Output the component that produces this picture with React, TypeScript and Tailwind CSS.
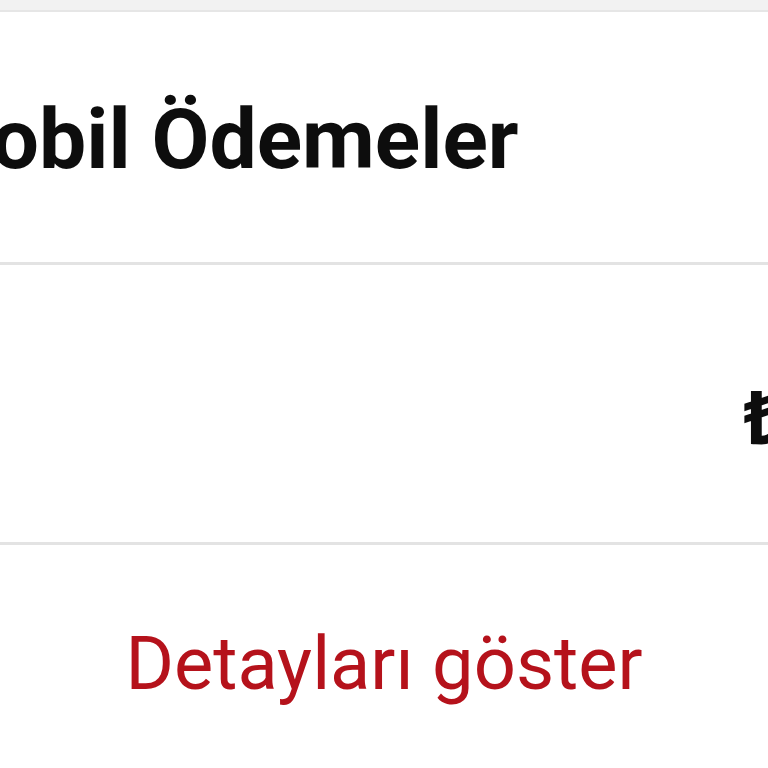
import React from 'react';

const font = { fontFamily: 'Roboto, "Noto Sans", sans-serif' };

export default function App() {
  return (
    <div className="w-[768px] h-[768px] overflow-hidden bg-white" style={font}>
      {/* status strip */}
      <div className="h-[10px] bg-[#f2f2f2]" />
      <div className="h-[2px] bg-[#e6e6e6]" />

      {/* header */}
      <div className="h-[250px] flex items-center overflow-hidden">
        <h1 className="ml-[-82px] whitespace-nowrap text-[84px] leading-none font-bold text-[#0d0d0d] pt-[6px]">
          Mobil Ödemeler
        </h1>
      </div>
      <div className="h-[3px] bg-[#e3e3e3]" />

      {/* amount row */}
      <div className="h-[277px] flex items-center overflow-hidden">
        <span className="ml-[743px] pt-[30px] whitespace-nowrap text-[74px] leading-none font-bold text-[#0d0d0d]">
          ₺120,00
        </span>
      </div>
      <div className="h-[3px] bg-[#e3e3e3]" />

      {/* details link */}
      <div className="flex justify-center pt-[82px]">
        <button className="text-[74px] leading-none text-[#b5121b]">Detayları göster</button>
      </div>
    </div>
  );
}
